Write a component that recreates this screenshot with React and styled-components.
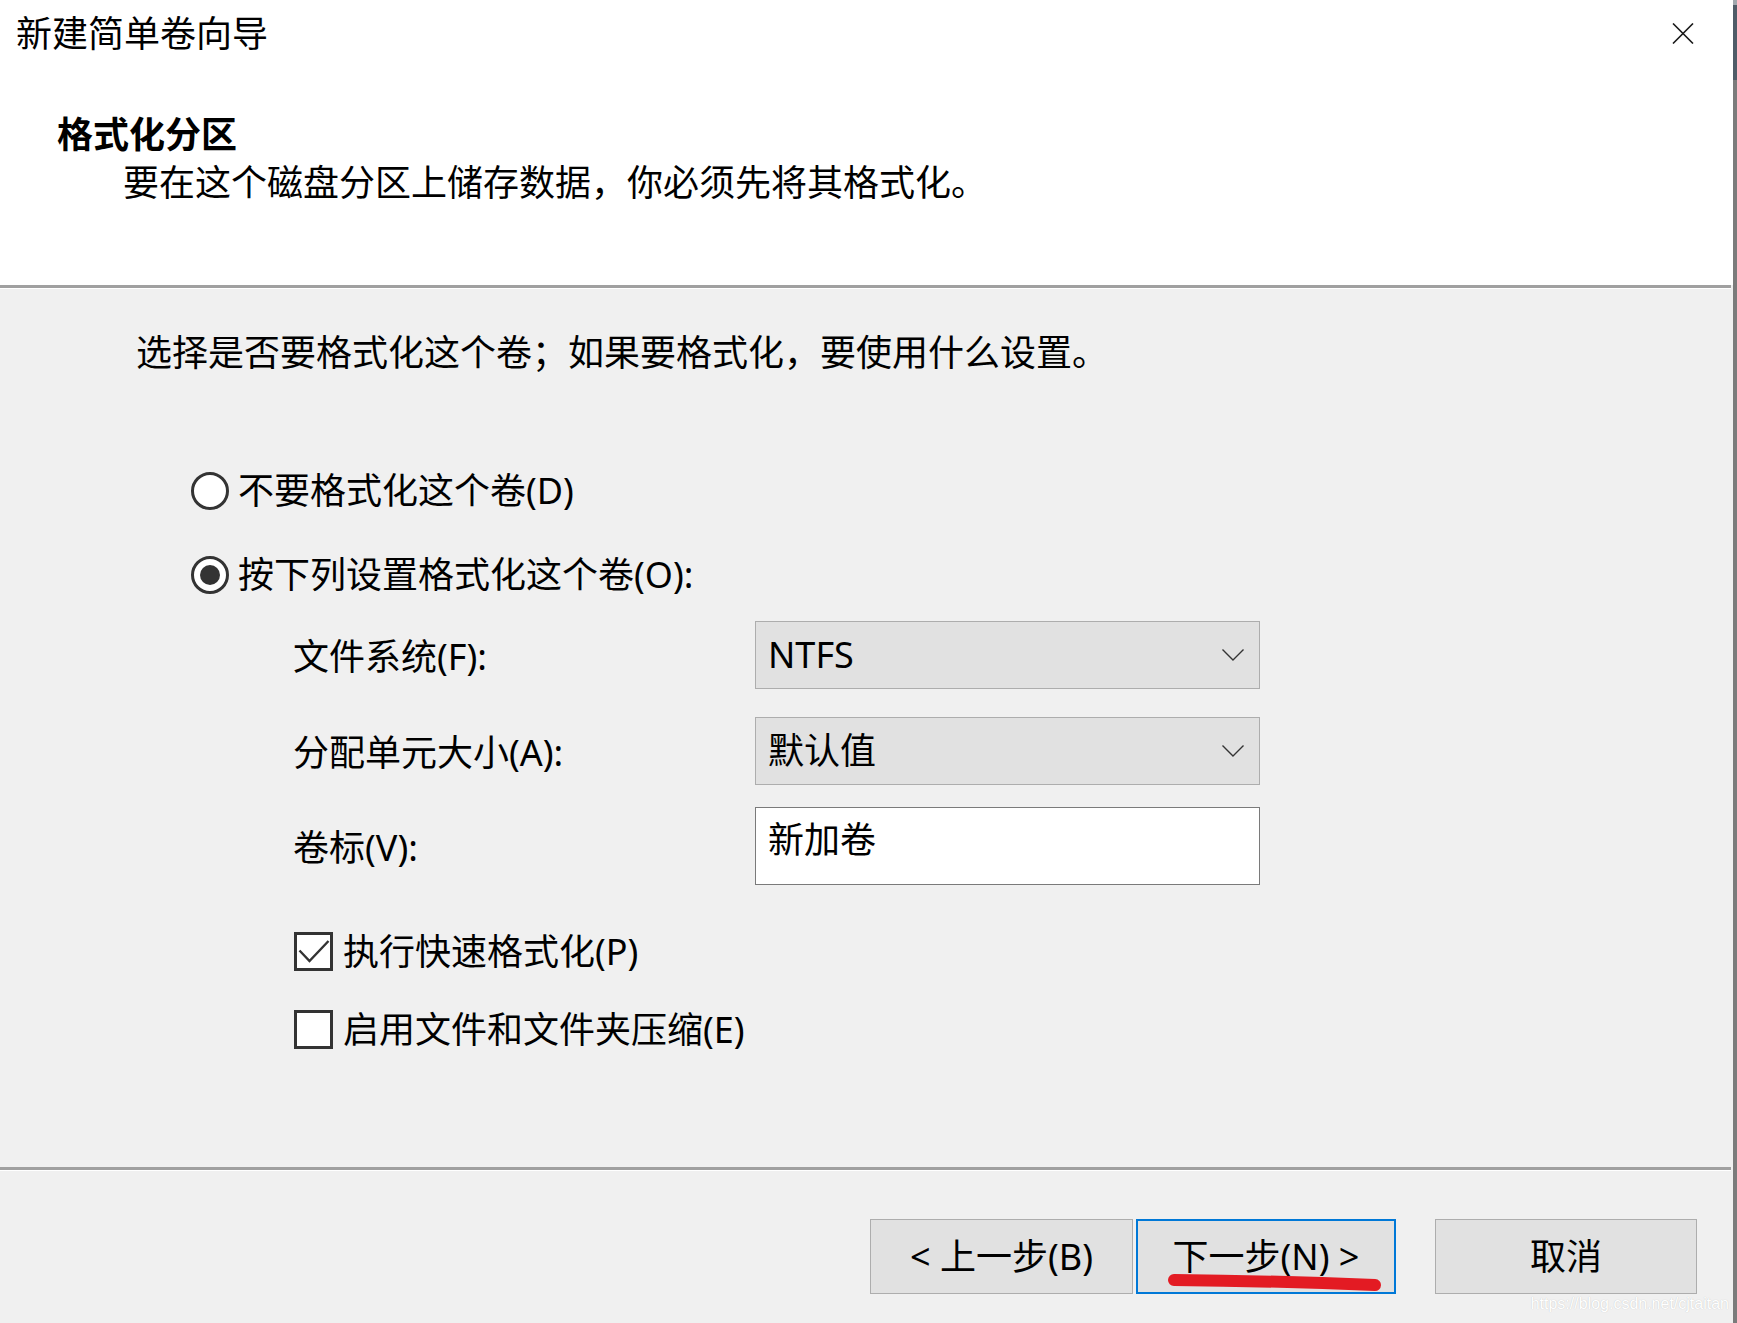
import React from 'react'
import styled, { createGlobalStyle } from 'styled-components'

const GlobalStyle = createGlobalStyle`
    html, body {
        margin: 0;
        padding: 0;
        background: #f0f0f0;
        overflow: hidden;
    }

    body {
        font-family: "Noto Sans", "Noto Sans CJK SC", sans-serif;
        color: #000;
    }
`;

const CloseIcon = () => (
    <svg width="22" height="21" viewBox="0 0 22 21">
        <path d="M1 0.5 L21 20.5 M21 0.5 L1 20.5" stroke="#1a1a1a" strokeWidth="1.6" fill="none" />
    </svg>
)

const ChevronIcon = () => (
    <svg width="22" height="12" viewBox="0 0 22 12">
        <path d="M0.5 0.5 L11 11 L21.5 0.5" stroke="#333" strokeWidth="1.4" fill="none" />
    </svg>
)

const CheckIcon = () => (
    <svg width="33" height="33" viewBox="0 0 33 33">
        <path d="M2.5 15.5 L12.5 26 L31.5 6" stroke="#333" strokeWidth="2.4" fill="none" />
    </svg>
)

const App = () => {
    return (
        <>
            <GlobalStyle />
            <Screen>
                <Wizard>
                    <Header>
                        <TitleBar>
                            <WindowTitle>新建简单卷向导</WindowTitle>
                            <CloseButton><CloseIcon /></CloseButton>
                        </TitleBar>
                        <PageTitle>格式化分区</PageTitle>
                        <PageSubtitle>要在这个磁盘分区上储存数据，你必须先将其格式化。</PageSubtitle>
                    </Header>
                    <Divider />
                    <Body>
                        <Instruction>选择是否要格式化这个卷；如果要格式化，要使用什么设置。</Instruction>
                        <RadioGroup>
                            <Option>
                                <Radio />
                                <span>不要格式化这个卷(D)</span>
                            </Option>
                            <Option>
                                <Radio $checked />
                                <span>按下列设置格式化这个卷(O):</span>
                            </Option>
                        </RadioGroup>
                        <Fields>
                            <FieldRow>
                                <FieldLabel>文件系统(F):</FieldLabel>
                                <Select>
                                    <span>NTFS</span>
                                    <ChevronIcon />
                                </Select>
                            </FieldRow>
                            <FieldRow $top={28}>
                                <FieldLabel>分配单元大小(A):</FieldLabel>
                                <Select>
                                    <span>默认值</span>
                                    <ChevronIcon />
                                </Select>
                            </FieldRow>
                            <FieldRow $top={22}>
                                <FieldLabel>卷标(V):</FieldLabel>
                                <TextField>新加卷</TextField>
                            </FieldRow>
                        </Fields>
                        <CheckList>
                            <CheckOption>
                                <Checkbox><CheckIcon /></Checkbox>
                                <span>执行快速格式化(P)</span>
                            </CheckOption>
                            <CheckOption>
                                <Checkbox />
                                <span>启用文件和文件夹压缩(E)</span>
                            </CheckOption>
                        </CheckList>
                    </Body>
                    <Divider />
                    <Footer>
                        <NavButtons>
                            <Button $width={263}>&lt; 上一步(B)</Button>
                            <Button $width={260} $focused>
                                下一步(N) &gt;
                                <Scribble viewBox="0 0 260 75" width="260" height="75">
                                    <path d="M38 61 Q 140 62 239 66" stroke="#e31b23" strokeWidth="12" strokeLinecap="round" fill="none" />
                                </Scribble>
                            </Button>
                        </NavButtons>
                        <Button $width={262}>取消</Button>
                    </Footer>
                </Wizard>
                <WindowEdge />
                <Watermark>https://blog.csdn.net/cjtaitan</Watermark>
            </Screen>
        </>
    )
}

const Screen = styled.div`
    position: relative;
    display: flex;
    width: 1737px;
    height: 1323px;
    overflow: hidden;
`;

const Wizard = styled.div`
    width: 1733px;
    display: flex;
    flex-direction: column;
    background: #f0f0f0;
`;

const WindowEdge = styled.div`
    width: 4px;
    background: linear-gradient(#a2a8ae 0 5px, #4f5b67 5px 80px, #7b7b7b 80px);
`;

const Header = styled.header`
    height: 285px;
    background: #fff;
    padding-top: 10px;
    box-sizing: border-box;
    font-size: 36px;
    line-height: 48px;
`;

const TitleBar = styled.div`
    height: 48px;
    display: flex;
    align-items: center;
    justify-content: space-between;
    padding: 0 39px 0 16px;
`;

const WindowTitle = styled.div`
    font-size: 36px;
`;

const CloseButton = styled.div`
    display: flex;
    width: 22px;
    height: 21px;
    margin-top: -2px;
`;

const PageTitle = styled.div`
    margin: 53px 0 0 57px;
    font-weight: 700;
`;

const PageSubtitle = styled.div`
    margin-left: 123px;
`;

const Divider = styled.div`
    height: 3px;
    margin-right: 2px;
    background: #a0a0a0;
    border-bottom: 1px solid #fff;
`;

const Body = styled.main`
    height: 878px;
    box-sizing: border-box;
    padding-top: 40px;
    font-size: 36px;
    line-height: 48px;
`;

const Instruction = styled.div`
    margin-left: 136px;
`;

const RadioGroup = styled.div`
    margin: 90px 0 0 191px;
    display: flex;
    flex-direction: column;
    gap: 36px;
`;

const Option = styled.label`
    display: flex;
    align-items: center;
    gap: 9px;
    height: 48px;
`;

const Radio = styled.span`
    position: relative;
    width: 38px;
    height: 38px;
    box-sizing: border-box;
    border: 3px solid #333;
    border-radius: 50%;
    background: #fff;

    &::after {
        content: "";
        display: ${p => (p.$checked ? 'block' : 'none')};
        position: absolute;
        left: 6px;
        top: 6px;
        width: 20px;
        height: 20px;
        border-radius: 50%;
        background: #333;
    }
`;

const Fields = styled.div`
    margin: 22px 0 0 293px;
    display: flex;
    flex-direction: column;
`;

const FieldRow = styled.div`
    display: grid;
    grid-template-columns: 462px 505px;
    align-items: center;
    margin-top: ${p => p.$top || 0}px;
`;

const FieldLabel = styled.span`
    padding-top: 3px;
`;

const Select = styled.div`
    height: 68px;
    box-sizing: border-box;
    display: flex;
    align-items: center;
    justify-content: space-between;
    padding: 0 15px 0 12px;
    background: #e1e1e1;
    border: 1px solid #adadad;
`;

const TextField = styled.div`
    height: 78px;
    box-sizing: border-box;
    padding: 8px 12px 0;
    background: #fff;
    border: 1px solid #7a7a7a;
`;

const CheckList = styled.div`
    margin: 47px 0 0 294px;
    display: flex;
    flex-direction: column;
    gap: 39px;
`;

const CheckOption = styled.label`
    display: flex;
    align-items: center;
    gap: 10px;
    height: 39px;
`;

const Checkbox = styled.span`
    width: 39px;
    height: 39px;
    box-sizing: border-box;
    border: 3px solid #333;
    background: #fff;
    display: flex;
`;

const Footer = styled.footer`
    flex: 1;
    display: flex;
    justify-content: flex-end;
    align-items: flex-start;
    gap: 39px;
    padding: 48px 36px 0 0;
`;

const NavButtons = styled.div`
    display: flex;
    gap: 3px;
`;

const Button = styled.button`
    position: relative;
    width: ${p => p.$width}px;
    height: 75px;
    box-sizing: border-box;
    background: #e1e1e1;
    border: ${p => (p.$focused ? '2px solid #0078d7' : '1px solid #adadad')};
    padding: 0;
    font-family: "Noto Sans", "Noto Sans CJK SC", sans-serif;
    font-size: 36px;
    line-height: 48px;
    color: #000;
`;

const Scribble = styled.svg`
    position: absolute;
    left: -2px;
    top: -2px;
    overflow: visible;
    pointer-events: none;
`;

const Watermark = styled.div`
    position: absolute;
    right: 8px;
    bottom: 11px;
    font-family: "Liberation Sans", Arial, sans-serif;
    font-size: 16px;
    line-height: 16px;
    color: #ffffff;
    text-shadow: 0 0 1px rgba(0, 0, 0, 0.22);
`;

export default App
